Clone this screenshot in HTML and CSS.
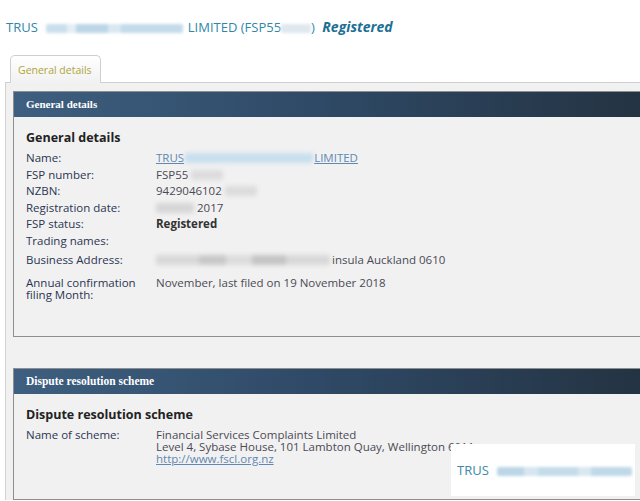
FILE: index.html
```html
<!DOCTYPE html>
<html lang="en">
<head>
    <meta charset="UTF-8">
    <meta name="viewport" content="width=device-width, initial-scale=1.0">
    <title>FSP Register - Registered</title>
    <link rel="stylesheet" href="styles.css">
</head>
<body>
    <h1 class="page-title">
        <span>TRUS</span><span class="redact redact-title"></span><span>LIMITED (FSP55</span><span class="redact redact-fsp"></span><span>)</span>
        <em class="status">Registered</em>
    </h1>

    <div class="tabs">
        <div class="tab">General details</div>
    </div>

    <div class="panel">
        <section class="box">
            <div class="box-head">General details</div>
            <div class="box-body">
                <h3>General details</h3>
                <dl class="fields">
                    <dt>Name:</dt>
                    <dd><a href="#">TRUS<span class="redact redact-name"></span>LIMITED</a></dd>
                    <dt>FSP number:</dt>
                    <dd>FSP55<span class="redact redact-short"></span></dd>
                    <dt>NZBN:</dt>
                    <dd>9429046102<span class="redact redact-short"></span></dd>
                    <dt>Registration date:</dt>
                    <dd><span class="redact redact-date"></span>2017</dd>
                    <dt>FSP status:</dt>
                    <dd><strong>Registered</strong></dd>
                    <dt>Trading names:</dt>
                    <dd></dd>
                    <dt class="row-address">Business Address:</dt>
                    <dd class="row-address"><span class="redact redact-address"></span>insula Auckland 0610</dd>
                    <dt class="row-annual">Annual confirmation filing Month:</dt>
                    <dd class="row-annual">November, last filed on 19 November 2018</dd>
                </dl>
            </div>
        </section>

        <section class="box box-dispute">
            <div class="box-head">Dispute resolution scheme</div>
            <div class="box-body">
                <h3>Dispute resolution scheme</h3>
                <dl class="fields">
                    <dt>Name of scheme:</dt>
                    <dd class="scheme">
                        <span>Financial Services Complaints Limited</span>
                        <span>Level 4, Sybase House, 101 Lambton Quay, Wellington 6011</span>
                        <a href="#">http://www.fscl.org.nz</a>
                    </dd>
                </dl>
            </div>
        </section>
    </div>

    <div class="stamp">TRUS<span class="redact redact-stamp"></span></div>
</body>
</html>
```

FILE: styles.css
```css
body {
    margin: 0;
    font-family: "Open Sans", "DejaVu Sans", sans-serif;
    background: #fff;
    color: #444;
    overflow: hidden;
    position: relative;
    min-height: 501px;
}

.page-title {
    margin: 0;
    padding: 19px 0 0 6px;
    font-size: 13px;
    font-weight: normal;
    line-height: 16px;
    color: #2f87a9;
    white-space: nowrap;
}

.status {
    font-weight: bold;
    font-size: 14px;
    color: #1c6f94;
    margin-left: 4px;
}

.redact {
    display: inline-block;
    vertical-align: middle;
    height: 9px;
    filter: blur(1.5px);
    border-radius: 2px;
}

.redact-title {
    width: 137px;
    margin: 0 5px 0 8px;
    background: linear-gradient(90deg, #c9dfec 0 15%, #e4eef4 15% 22%, #bcd6e7 22% 45%, #d9e8f1 45% 55%, #c3dbea 55% 100%);
}

.redact-fsp {
    width: 30px;
    background: #dfe8ee;
}

.redact-stamp {
    width: 135px;
    margin-left: 8px;
    background: linear-gradient(90deg, #bcd6e7 0 20%, #d6e6f0 20% 30%, #c4dcea 30% 60%, #d9e8f1 60% 70%, #c0d9e8 70% 100%);
}

.tabs {
    margin-top: 20px;
    padding-left: 10px;
    position: relative;
    z-index: 1;
}

.tab {
    width: 82px;
    height: 27px;
    padding-left: 7px;
    border: 1px solid #cfcfcf;
    border-bottom: none;
    border-radius: 5px 5px 0 0;
    background: linear-gradient(#fff, #f1f1f1);
    color: #b1a43a;
    font-size: 10.5px;
    line-height: 29px;
    margin-bottom: -1px;
    white-space: nowrap;
}

.panel {
    margin-left: 5px;
    width: 660px;
    border-left: 1px solid #d2d2d2;
    border-top: 1px solid #cfcfcf;
    background: #f1f1f1;
    padding: 8px 0 0 7px;
}

.box {
    border: 1px solid #8e8e8e;
    background: #f1f1f1;
}

.box-dispute {
    margin-top: 31px;
}

.box-head {
    height: 25px;
    line-height: 25px;
    padding-left: 12px;
    background: linear-gradient(90deg, #3e5f80, #2f4a67 45%, #23313f);
    color: #fff;
    font-family: "Liberation Serif", serif;
    font-weight: bold;
    font-size: 11px;
}

.box-dispute .box-head {
    font-size: 11.5px;
}

.box-body {
    padding: 13px 12px 35px;
}

.box-dispute .box-body {
    padding-bottom: 34px;
}

.box-body h3 {
    margin: 0 0 6px;
    font-size: 12.5px;
    line-height: 16px;
    color: #222;
}

.fields {
    display: grid;
    grid-template-columns: 130px 1fr;
    row-gap: 4.5px;
    margin: 0;
    font-size: 11.5px;
    line-height: 12px;
}

.fields dt {
    color: #2b3552;
    width: 118px;
}

.fields dd {
    margin: 0;
    color: #4a4a55;
}

.fields strong {
    color: #333;
}

.fields a {
    color: #5f88b2;
}

.fields .redact {
    height: 10px;
    vertical-align: -1px;
}

.fields .row-address {
    margin-top: 2.5px;
}

.fields .row-annual {
    margin-top: 6.5px;
}

.scheme span,
.scheme a {
    display: block;
    height: 12px;
    white-space: nowrap;
}

.scheme a {
    width: max-content;
}

.redact-name {
    width: 128px;
    margin: 0 1px;
    background: #c7dfee;
    filter: blur(2px);
}

.redact-short {
    width: 32px;
    margin-left: 3px;
    background: #dcdcdc;
    filter: blur(2px);
}

.redact-date {
    width: 38px;
    margin-right: 3px;
    background: #d6d6d6;
    filter: blur(2px);
}

.redact-address {
    width: 174px;
    margin-right: 2px;
    background: linear-gradient(90deg, #d8d8d8 0 25%, #c8c8c8 25% 40%, #dcdcdc 40% 55%, #c4c4c4 55% 75%, #d8d8d8 75% 100%);
    filter: blur(2px);
}

.stamp {
    position: absolute;
    left: 451px;
    top: 444px;
    width: 178px;
    height: 52px;
    padding-left: 6px;
    background: #fff;
    color: #3a8aa8;
    font-size: 13px;
    line-height: 52px;
    white-space: nowrap;
}
```
